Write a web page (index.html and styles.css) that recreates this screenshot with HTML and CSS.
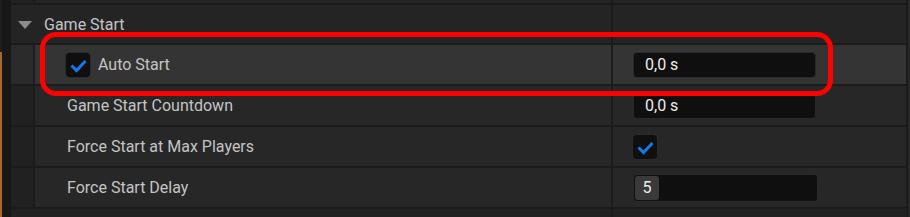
FILE: index.html
```html
<!DOCTYPE html>
<html lang="en">
<head>
  <meta charset="UTF-8" />
  <title>Details - Game Start</title>
  <link rel="stylesheet" href="styles.css">
</head>
<body>
  <div class="frame">
    <div class="edge"></div>
    <div class="gutter"></div>
    <div class="panel">
      <div class="row top">
        <div class="indent"></div>
        <div class="name"></div>
        <div class="value"><div class="stub"></div></div>
      </div>

      <div class="row category">
        <div class="name">
          <span class="arrow"></span>
          <span class="label">Game Start</span>
        </div>
        <div class="value"></div>
      </div>

      <div class="row hover">
        <div class="indent"></div>
        <div class="name">
          <span class="check">
            <svg viewBox="0 0 24 24" width="24" height="24"><path d="M5.5 12.5 L10.5 17.5 L19.5 8" /></svg>
          </span>
          <span class="label">Auto Start</span>
        </div>
        <div class="value"><div class="field">0,0 s</div></div>
      </div>

      <div class="row">
        <div class="indent"></div>
        <div class="name"><span class="label">Game Start Countdown</span></div>
        <div class="value"><div class="field">0,0 s</div></div>
      </div>

      <div class="row">
        <div class="indent"></div>
        <div class="name"><span class="label">Force Start at Max Players</span></div>
        <div class="value">
          <span class="check">
            <svg viewBox="0 0 24 24" width="24" height="24"><path d="M5.5 12.5 L10.5 17.5 L19.5 8" /></svg>
          </span>
        </div>
      </div>

      <div class="row">
        <div class="indent"></div>
        <div class="name"><span class="label">Force Start Delay</span></div>
        <div class="value"><div class="field spin"><span class="knob">5</span></div></div>
      </div>

      <div class="row tail">
        <div class="indent"></div>
        <div class="name"></div>
        <div class="value"></div>
      </div>
    </div>
    <div class="edge-right"></div>
  </div>

  <div class="highlight"></div>
</body>
</html>
```

FILE: styles.css
```css
:root {
  --line: #1b1b1b;
  --row: #272727;
  --row-hover: #343434;
  --indent: #212121;
  --text: #c4c4c4;
  --value: #ececec;
}

html, body {
  margin: 0;
  padding: 0;
  height: 100%;
  overflow: hidden;
  background: #161616;
  font-family: Roboto, "Noto Sans", sans-serif;
  font-size: 16px;
}

.frame {
  display: flex;
  height: 217px;
}

.edge {
  width: 2px;
  background: linear-gradient(#1e1e1e 0 52px, #a8682c 52px);
}

.gutter {
  width: 9px;
  background: #171717;
}

.panel {
  width: 895px;
  border-right: 2px solid var(--line);
}

.edge-right {
  flex: 1;
  background: #262626;
}

.row {
  display: grid;
  grid-template-columns: 22px 578px 1fr;
  height: 41px;
  box-sizing: border-box;
  border-bottom: 2px solid var(--line);
  background: var(--row);
}

.row.top {
  height: 5px;
  background: #242424;
}

.row.tail {
  height: 8px;
  border-bottom: none;
  background: #212121;
}

.row.category {
  height: 40px;
  background: #242424;
}

.row.category .name {
  grid-column: 1 / 3;
  border-left: none;
  padding-left: 7px;
}

.row.hover {
  background: var(--row-hover);
}

.indent {
  background: var(--indent);
}

.row.hover .indent {
  background: #2b2b2b;
}

.name {
  display: flex;
  align-items: center;
  border-left: 2px solid var(--line);
  padding-left: 31px;
  color: var(--text);
}

.name > .label:first-child {
  margin-left: 1px;
}

.row.tail .name {
  border-left: none;
}

.value {
  display: flex;
  align-items: center;
  border-left: 2px solid var(--line);
  padding-left: 20px;
}

.arrow {
  width: 0;
  height: 0;
  border-left: 7px solid transparent;
  border-right: 7px solid transparent;
  border-top: 8px solid #8c8c8c;
  margin-right: 12px;
  margin-top: 1px;
}

.label {
  white-space: nowrap;
}

.check {
  display: flex;
  width: 24px;
  height: 24px;
  background: #0f0f0f;
  border-radius: 4px;
  box-shadow: 0 0 0 1px #2a2a2a;
  margin-right: 8px;
}

.check path {
  fill: none;
  stroke: #1479e6;
  stroke-width: 3;
}

.field {
  width: 183px;
  height: 26px;
  box-sizing: border-box;
  background: #0f0f0f;
  border: 1px solid #2a2a2a;
  border-radius: 4px;
  padding-left: 11px;
  display: flex;
  align-items: center;
  color: var(--value);
}

.field.spin {
  height: 28px;
  width: 185px;
  padding-left: 1px;
}

.knob {
  width: 24px;
  height: 24px;
  background: #3a3a3a;
  border-radius: 3px;
  display: flex;
  align-items: center;
  justify-content: center;
}

.stub {
  width: 183px;
  height: 2px;
  margin-top: -2px;
  align-self: flex-start;
  background: #2f2f2f;
  border-radius: 0 0 4px 4px;
}

.highlight {
  position: absolute;
  left: 40px;
  top: 32px;
  width: 783px;
  height: 54px;
  border: 5px solid #ff0000;
  border-radius: 16px;
}
```
